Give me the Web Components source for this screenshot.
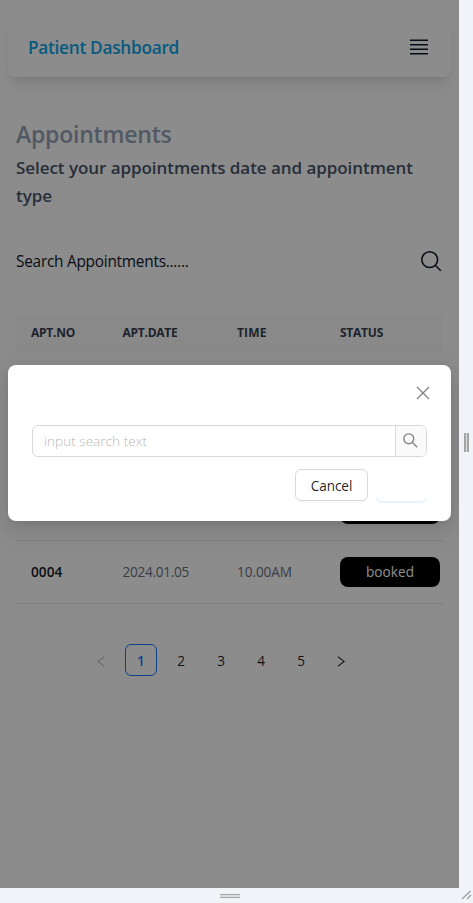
<!DOCTYPE html>
<html lang="en">
<head>
<meta charset="utf-8">
<title>Patient Dashboard</title>
<style>
body{margin:0;background:#f0f4f9;font-family:"Open Sans","Noto Sans",sans-serif;overflow:hidden}
</style>
</head>
<body>
<device-frame>
  <patient-page></patient-page>
  <search-modal slot="overlay"></search-modal>
</device-frame>
<script>
const make=(tag,html,after)=>customElements.define(tag,class extends HTMLElement{
  constructor(){super();this.attachShadow({mode:'open'}).innerHTML=html;}
  connectedCallback(){if(after)after(this);}
});

/* Single line of text tracked to a given measure (w attribute, px). */
make('fit-text','<style>:host{display:inline-block;white-space:nowrap}span{display:inline-block}</style><span><slot></slot></span>',el=>{
  const s=el.shadowRoot.querySelector('span'),n=el.textContent.length;
  const d=+el.getAttribute('w')-s.getBoundingClientRect().width;
  s.style.letterSpacing=(d/n)+'px';
});

make('top-bar',`<style>
:host{display:flex;align-items:center;justify-content:space-between;height:60px;margin:17px 8px 0;padding:0 23px 0 20px;box-sizing:border-box;border-radius:8px;background:#fff;box-shadow:0 10px 15px -3px rgba(0,0,0,.1),0 4px 6px -4px rgba(0,0,0,.1)}
fit-text{font-size:17.3px;line-height:28px;font-weight:600;color:#0ea5e9;padding-top:1px}
svg{display:block}
</style>
<fit-text w="151">Patient Dashboard</fit-text>
<svg width="18" height="16" viewBox="0 0 18 16" stroke="#0f172a" stroke-width="1.5"><path d="M0 1.2h18M0 5.7h18M0 10.2h18M0 14.7h18"/></svg>`);

make('status-badge',`<style>
:host{display:flex;align-items:center;justify-content:center;box-sizing:border-box;width:100px;height:30px;border-radius:8px;background:#000;color:#fff;font-size:13.6px;font-weight:500}
</style><slot></slot>`);

make('appointment-table',`<style>
:host{display:block;margin-top:36px}
.r{display:grid;grid-template-columns:91.5px 114.5px 103px 1fr;align-items:center;height:63px;box-sizing:border-box;padding-left:15px;border-bottom:1px solid #e5e7eb;font-size:13.6px;color:#6b7280;line-height:20px}
.h{height:39px;background:#f9fafb;border:0;font-size:12px;font-weight:700;color:#374151}
.id{font-weight:600;color:#111827}
.blank{border-color:transparent}
</style>
<div class="r h"><fit-text w="44">APT.NO</fit-text><fit-text w="55">APT.DATE</fit-text><fit-text w="29.5">TIME</fit-text><fit-text w="43">STATUS</fit-text></div>
<div class="r blank"></div>
<div class="r blank"></div>
<div class="r"><i></i><i></i><i></i><status-badge></status-badge></div>
<div class="r"><fit-text class="id" w="31.5">0004</fit-text><fit-text w="66.5">2024.01.05</fit-text><fit-text w="55">10.00AM</fit-text><status-badge><fit-text w="48">booked</fit-text></status-badge></div>`);

make('page-nav',`<style>
:host{display:flex;gap:8px;margin:40px 0 0 85px}
div{width:32px;height:32px;box-sizing:border-box;display:flex;align-items:center;justify-content:center;font-size:13.6px;color:rgba(0,0,0,.88)}
.on{border:1px solid #1677ff;border-radius:6px;color:#1677ff;font-weight:600}
svg{margin-top:2px;fill:none;stroke:currentColor;stroke-width:1.05}
.off{color:rgba(0,0,0,.25)}
</style>
<div class="off"><svg width="8" height="11" viewBox="0 0 8 11"><path d="M7.2.7.9 5.5l6.3 4.8"/></svg></div>
<div class="on">1</div><div><fit-text w="7.5">2</fit-text></div><div><fit-text w="7.5">3</fit-text></div><div><fit-text w="7.5">4</fit-text></div><div><fit-text w="7.5">5</fit-text></div>
<div><svg width="8" height="11" viewBox="0 0 8 11"><path d="M.8.7l6.3 4.8-6.3 4.8"/></svg></div>`);

make('patient-page',`<style>
:host{display:flow-root}
main{padding:0 16px}
h1{margin:41px 0 0;font-size:23px;line-height:32px;font-weight:600;color:#94a3b8}
p{margin:4px 0 0;font-size:17px;line-height:28px;font-weight:550;color:#475569}
.s{display:flex;justify-content:space-between;align-items:center;height:32px;margin-top:35px;padding-right:1px;font-size:15.4px;color:#0f172a}
svg{display:block}fit-text{display:block}
</style>
<top-bar></top-bar>
<main>
<h1><fit-text w="155.5">Appointments</fit-text></h1>
<p><fit-text w="397">Select your appointments date and appointment</fit-text><fit-text w="36">type</fit-text></p>
<div class="s"><fit-text w="172.5">Search Appointments......</fit-text>
<svg width="22" height="22" viewBox="0 0 22 22" fill="none" stroke="#0f172a" stroke-width="1.5"><circle cx="9.7" cy="9.7" r="7.9"/><path d="M15.3 15.3 20.8 20.8"/></svg></div>
<appointment-table></appointment-table>
</main>
<page-nav></page-nav>`);

make('search-modal',`<style>
:host{display:flex;flex-direction:column;box-sizing:border-box;height:156px;padding:20px 24px;background:#fff;border-radius:8px;color:rgba(0,0,0,.88);font-size:13.6px;box-shadow:0 6px 16px 0 rgba(0,0,0,.08),0 3px 6px -4px rgba(0,0,0,.12),0 9px 28px 8px rgba(0,0,0,.05)}
svg{display:block}
.x{align-self:flex-end;margin:0 -3px 0 0;padding:1px 0 25px;flex:none}
.in{display:flex;flex:none;height:32px;box-sizing:border-box;border:1px solid #d9d9d9;border-radius:6px;overflow:hidden}
.in>span{flex:1;padding-left:11px;line-height:30px;color:#b8b8b8;font-weight:350}
.btn{width:30px;border-left:1px solid #d9d9d9;background:#fafafa;display:flex;justify-content:center;padding-top:7px}
.btn svg{margin-right:1px}
.f{display:flex;gap:8px;justify-content:flex-end;margin-top:12px}
.f div{box-sizing:border-box;height:32px;border-radius:6px;display:flex;align-items:center;justify-content:center}
.c{width:73px;border:1px solid #d9d9d9;box-shadow:0 2px 0 rgba(0,0,0,.02)}
.p{width:51px;background:#fff;box-shadow:0 2px 0 rgba(5,145,255,.1)}
</style>
<svg class="x" width="14" height="14" viewBox="0 0 14 14" stroke="#858585" stroke-width="1.4"><path d="M1 1l12 12M13 1 1 13"/></svg>
<div class="in"><span><fit-text w="103">input search text</fit-text></span><div class="btn"><svg width="15" height="15" viewBox="0 0 15 15" fill="none" stroke="#858585" stroke-width="1.4"><circle cx="5.8" cy="5.8" r="4.9"/><path d="M9.3 9.3 14.2 14.2"/></svg></div></div>
<div class="f"><div class="c"><fit-text w="41.5">Cancel</fit-text></div><div class="p"></div></div>`);

make('device-frame',`<style>
:host{display:grid;grid-template-columns:459px 14px;grid-template-rows:888px 15px;width:473px;height:903px}
.screen{position:relative;overflow:hidden;background:#fff}
.mask{position:absolute;inset:0;background:rgba(0,0,0,.45)}
.over{position:absolute;left:8px;right:8px;top:365px}
.v,.b,.k{display:flex}
.v{padding:433px 0 0 5px}
.v i{width:1px;height:19px;border:solid #a4a4a4;border-width:0 2px;background:#ddd}
.b{padding:6px 0 0 220px}
.b i{width:20px;height:2px;border:solid #a4a4a4;border-width:1px 0;background:#ddd}
.k svg{margin:2px 0 0 2px}
</style>
<div class="screen"><slot></slot><div class="mask"></div><div class="over"><slot name="overlay"></slot></div></div>
<div class="v"><i></i></div><div class="b"><i></i></div>
<div class="k"><svg width="12" height="10" viewBox="0 0 12 10" stroke="#a4a4a4" stroke-width="1.5"><path d="M1 9 9.5 1M6 9l4-4"/></svg></div>`);
</script>
</body>
</html>
